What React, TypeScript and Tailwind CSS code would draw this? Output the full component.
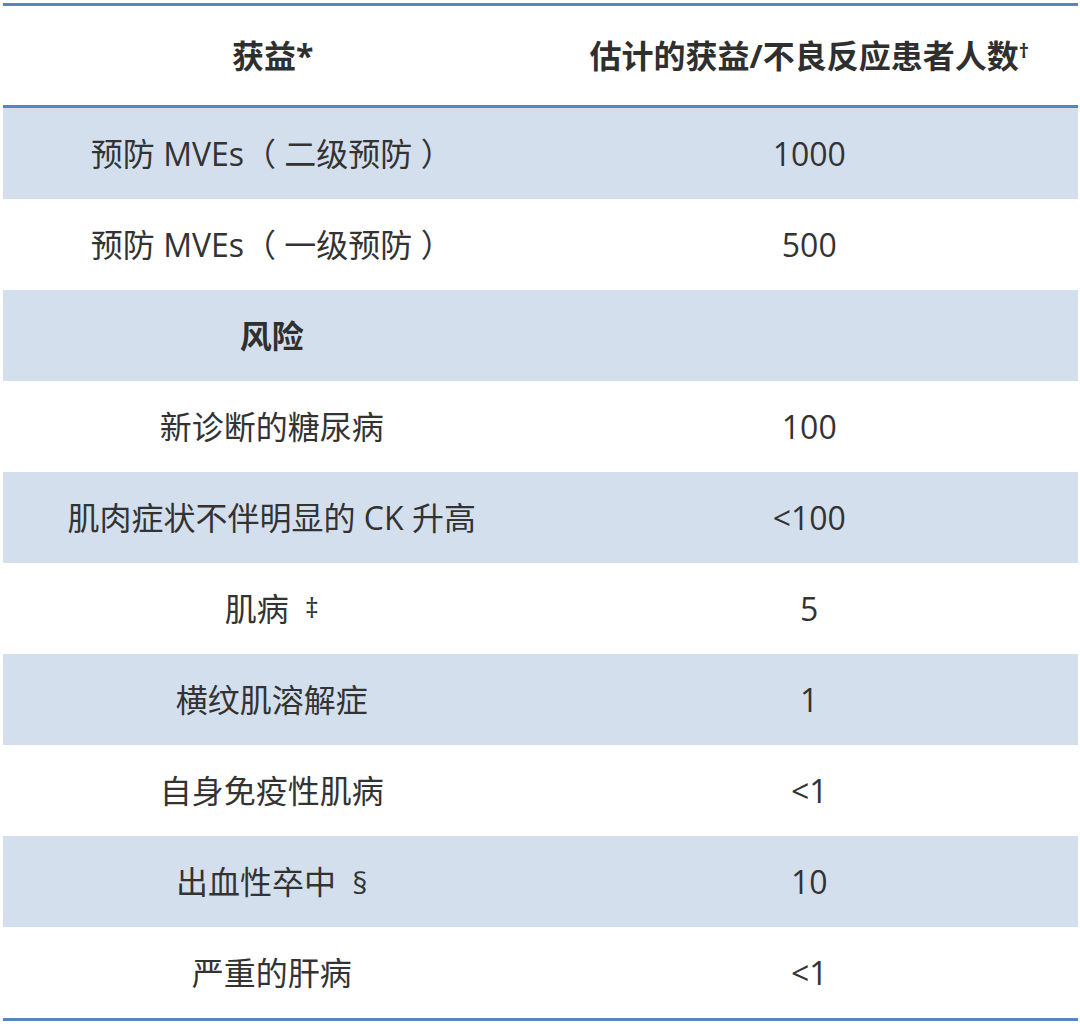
const font = "[font-family:'Open_Sans','Noto_Sans_CJK_SC',sans-serif]";

type Row = { left: React.ReactNode; right: string; shaded: boolean; bold?: boolean };

const rows: Row[] = [
  { left: "预防 MVEs（ 二级预防 ）", right: "1000", shaded: true },
  { left: "预防 MVEs（ 一级预防 ）", right: "500", shaded: false },
  { left: "风险", right: "", shaded: true, bold: true },
  { left: "新诊断的糖尿病", right: "100", shaded: false },
  { left: "肌肉症状不伴明显的 CK 升高", right: "<100", shaded: true },
  {
    left: (
      <>
        肌病 <span className="ml-2 text-[27px] align-[3px]">‡</span>
      </>
    ),
    right: "5",
    shaded: false,
  },
  { left: "横纹肌溶解症", right: "1", shaded: true },
  { left: "自身免疫性肌病", right: "<1", shaded: false },
  {
    left: (
      <>
        出血性卒中 <span className="ml-2 text-[30px]">§</span>
      </>
    ),
    right: "10",
    shaded: true,
  },
  { left: "严重的肝病", right: "<1", shaded: false },
];

export default function App() {
  return (
    <div className={`w-[1080px] h-[1027px] bg-white pt-[3px] ${font}`}>
      <div className="mx-[3px] w-[1075px] border-t-[3px] border-b-[3px] border-[#5885bd] text-[#333333]">
        <div className="grid grid-cols-2 h-[102px] items-center border-b-[3px] border-[#5885bd] text-[32px] font-bold text-[#2f2f2f]">
          <div className="text-center pl-[2px]">获益*</div>
          <div className="text-center">
            估计的获益/不良反应患者人数<span className="text-[20px] align-[10px] font-bold">†</span>
          </div>
        </div>
        {rows.map((r, i) => (
          <div
            key={i}
            className={`grid grid-cols-2 h-[91px] items-center text-[32px] ${r.shaded ? "bg-[#d4dfee]" : "bg-white"} ${r.bold ? "font-bold text-[#2f2f2f]" : ""}`}
          >
            <div className="text-center">{r.left}</div>
            <div className="text-center">{r.right}</div>
          </div>
        ))}
      </div>
    </div>
  );
}
